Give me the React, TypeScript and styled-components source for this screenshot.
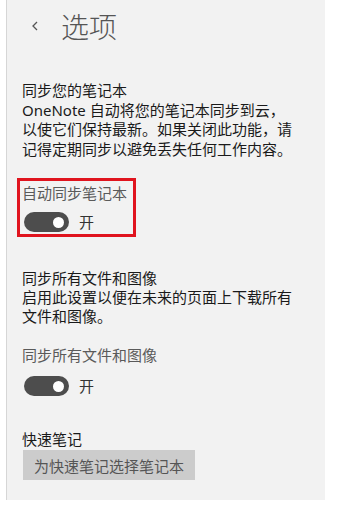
import React from "react";
import styled, { createGlobalStyle } from "styled-components";

const Global = createGlobalStyle`
  html, body { margin: 0; padding: 0; background: #ffffff; }
  body { font-family: "Noto Sans", "Noto Sans CJK SC", sans-serif; }
`;

const Panel = styled.div`
  margin-left: 6px;
  width: 319px;
  height: 500px;
  background: #f2f2f2;
  border-left: 1px solid #d6d6d6;
  box-sizing: border-box;
  display: flex;
  flex-direction: column;
  padding-left: 15px;
  font-family: "Noto Sans", "Noto Sans CJK SC", sans-serif;
  font-size: 15px;
  color: #1a1a1a;
`;

const Header = styled.div`
  display: flex;
  align-items: center;
  height: 40px;
  margin-top: 6px;
`;

const Back = styled.svg`
  width: 8px;
  height: 10px;
  margin-left: 9px;
  margin-right: 22px;
`;

const Title = styled.div`
  font-family: "Noto Sans CJK SC", sans-serif;
  font-weight: 300;
  font-size: 28px;
  line-height: 40px;
  color: #555555;
`;

const Text = styled.div<{ $mt: number; $lh?: number }>`
  margin-top: ${(p) => p.$mt}px;
  line-height: ${(p) => p.$lh ?? 19.5}px;
  font-family: "Noto Sans", "Noto Sans CJK SC", sans-serif;
  color: #1a1a1a;
  width: 270px;
`;

const Highlight = styled.div`
  margin-top: 19px;
  margin-left: -5px;
  width: 119px;
  border: 3px solid #e0141e;
  box-sizing: border-box;
  padding: 2px 0 2px 2px;
`;

const ToggleLabel = styled.div<{ $mt?: number }>`
  margin-top: ${(p) => p.$mt ?? 0}px;
  line-height: 20px;
  color: #5a5a5a;
  font-family: "Noto Sans CJK SC", sans-serif;
`;

const ToggleRow = styled.div<{ $mt: number; $ml?: number }>`
  display: flex;
  align-items: center;
  margin-top: ${(p) => p.$mt}px;
  margin-left: ${(p) => p.$ml ?? 2}px;
  height: 20px;
`;

const Track = styled.div`
  width: 45px;
  height: 20px;
  border-radius: 10px;
  background: #4d4d4d;
  display: flex;
  align-items: center;
  justify-content: flex-end;
  padding-right: 5px;
  box-sizing: border-box;
`;

const Knob = styled.div`
  width: 11px;
  height: 11px;
  border-radius: 50%;
  background: #ffffff;
`;

const State = styled.span`
  margin-left: 10px;
  color: #333333;
  font-family: "Noto Sans CJK SC", sans-serif;
  line-height: 20px;
`;

const Button = styled.div`
  margin-top: 1px;
  margin-left: 1px;
  width: 172px;
  height: 30px;
  background: #cccccc;
  color: #555555;
  display: flex;
  align-items: center;
  justify-content: center;
  font-family: "Noto Sans CJK SC", sans-serif;
`;

const Toggle = ({ mt, ml }: { mt: number; ml?: number }) => (
  <ToggleRow $mt={mt} $ml={ml}>
    <Track>
      <Knob />
    </Track>
    <State>开</State>
  </ToggleRow>
);

export default function App() {
  return (
    <>
      <Global />
      <Panel>
        <Header>
          <Back viewBox="0 0 8 10">
            <polyline points="6,1 2,5 6,9" fill="none" stroke="#555" strokeWidth="1.3" />
          </Back>
          <Title>选项</Title>
        </Header>
        <Text $mt={35}>
          同步您的笔记本
          <br />
          OneNote 自动将您的笔记本同步到云，以使它们保持最新。如果关闭此功能，请记得定期同步以避免丢失任何工作内容。
        </Text>
        <Highlight>
          <ToggleLabel>自动同步笔记本</ToggleLabel>
          <Toggle mt={9} ml={2} />
        </Highlight>
        <Text $mt={32} $lh={19}>
          同步所有文件和图像
          <br />
          启用此设置以便在未来的页面上下载所有文件和图像。
        </Text>
        <ToggleLabel $mt={19}>同步所有文件和图像</ToggleLabel>
        <Toggle mt={11} ml={2} />
        <Text $mt={33} $lh={20}>快速笔记</Text>
        <Button>为快速笔记选择笔记本</Button>
      </Panel>
    </>
  );
}
